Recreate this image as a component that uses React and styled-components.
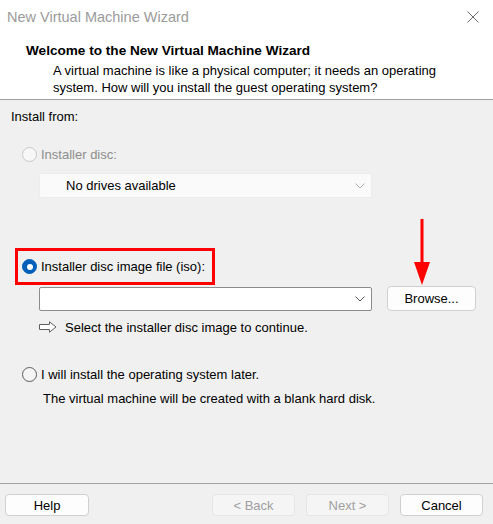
import React from "react";
import styled, { createGlobalStyle } from "styled-components";

const Global = createGlobalStyle`
  html, body { margin: 0; padding: 0; background: #f0f0f0; }
  body { font-family: "Liberation Sans", Arial, sans-serif; }
`;

const Window = styled.div`
  width: 493px;
  height: 524px;
  display: flex;
  flex-direction: column;
  background: #f0f0f0;
  color: #000;
  font-size: 13px;
  overflow: hidden;
`;

const Header = styled.div`
  background: #fff;
  height: 99px;
  border-bottom: 1px solid #a0a0a0;
  display: flex;
  flex-direction: column;
`;

const TitleBar = styled.div`
  height: 34px;
  display: flex;
  align-items: center;
  justify-content: space-between;
  padding: 0 14px 0 7px;
`;

const Title = styled.div`
  font-size: 14.5px;
  color: #9b9b9b;
`;

const Intro = styled.div`
  padding: 9px 0 0 26px;
`;

const Heading = styled.div`
  font-weight: bold;
  font-size: 13.6px;
  line-height: 16px;
`;

const Desc = styled.div`
  margin: 3px 0 0 27px;
  line-height: 17px;
`;

const Content = styled.div`
  position: relative;
  flex: 1;
  display: flex;
  flex-direction: column;
`;

const SectionLabel = styled.div`
  padding: 9px 0 0 11px;
  line-height: 16px;
`;

const RadioRow = styled.div`
  display: flex;
  align-items: center;
  gap: 4px;
  height: 18px;
  margin-top: ${(p) => p.$mt || 0}px;
  padding-left: ${(p) => (p.$inset ? 4 : 22)}px;
  color: ${(p) => (p.$disabled ? "#8d8d8d" : "#000")};
`;

const Radio = styled.span`
  width: 15px;
  height: 15px;
  box-sizing: border-box;
  border-radius: 50%;
  flex: none;
  display: flex;
  align-items: center;
  justify-content: center;
  background: ${(p) => (p.$checked ? "#005fb8" : p.$disabled ? "#f7f7f7" : "#f5f5f5")};
  border: 1px solid
    ${(p) => (p.$checked ? "#005fb8" : p.$disabled ? "#c8c8c8" : "#5c5c5c")};
  &::after {
    content: "";
    display: ${(p) => (p.$checked ? "block" : "none")};
    width: 6px;
    height: 6px;
    border-radius: 50%;
    background: #fff;
  }
`;

const Highlight = styled.div`
  margin: 50px 0 0 15px;
  width: 200px;
  height: 37px;
  box-sizing: border-box;
  border: 3px solid #ff0000;
  display: flex;
  align-items: center;
`;

const Combo = styled.div`
  width: 333px;
  height: ${(p) => (p.$disabled ? 25 : 24)}px;
  box-sizing: border-box;
  margin: ${(p) => p.$m || "0"};
  display: flex;
  align-items: center;
  justify-content: space-between;
  padding: 0 6px 0 26px;
  border-radius: 2px;
  background: ${(p) => (p.$disabled ? "#fafafa" : "#fff")};
  border: 1px solid ${(p) => (p.$disabled ? "#ececec" : "#8c8c8c")};
  color: #000;
`;

const Chevron = ({ color }) => (
  <svg width="10" height="6" viewBox="0 0 10 6">
    <path d="M0.5 0.5 L5 5 L9.5 0.5" fill="none" stroke={color} strokeWidth="1" />
  </svg>
);

const FileRow = styled.div`
  display: flex;
  align-items: flex-start;
  margin: 1px 0 0 39px;
  gap: 15px;
`;

const PushButton = styled.button`
  width: ${(p) => p.$w || 83}px;
  height: ${(p) => p.$h || 22}px;
  box-sizing: border-box;
  padding: 0;
  font-family: inherit;
  font-size: 13px;
  border-radius: 4px;
  background: ${(p) => (p.disabled ? "#f5f5f5" : "#fdfdfd")};
  border: 1px solid ${(p) => (p.disabled ? "#e6e6e6" : "#d0d0d0")};
  color: ${(p) => (p.disabled ? "#a0a0a0" : "#000")};
`;

const Hint = styled.div`
  display: flex;
  align-items: center;
  gap: 8px;
  height: 16px;
  margin: 8px 0 0 39px;
`;

const Note = styled.div`
  margin: 8px 0 0 43px;
  line-height: 16px;
`;

const RedArrow = styled.svg`
  position: absolute;
  left: 413px;
  top: 119px;
`;

const Footer = styled.div`
  height: 41px;
  border-top: 1px solid #a0a0a0;
  box-sizing: border-box;
  display: flex;
  align-items: flex-start;
  justify-content: space-between;
  padding: 10px 10px 0 5px;
`;

const ButtonGroup = styled.div`
  display: flex;
  gap: 11px;
`;

export default function App() {
  return (
    <>
      <Global />
      <Window>
        <Header>
          <TitleBar>
            <Title>New Virtual Machine Wizard</Title>
            <svg width="12" height="12" viewBox="0 0 12 12">
              <path d="M0.5 0.5 L11.5 11.5 M11.5 0.5 L0.5 11.5" stroke="#6a6a6a" strokeWidth="1" />
            </svg>
          </TitleBar>
          <Intro>
            <Heading>Welcome to the New Virtual Machine Wizard</Heading>
            <Desc>
              A virtual machine is like a physical computer; it needs an operating
              <br />
              system. How will you install the guest operating system?
            </Desc>
          </Intro>
        </Header>
        <Content>
          <SectionLabel>Install from:</SectionLabel>
          <RadioRow $mt={20} $disabled>
            <Radio $disabled />
            Installer disc:
          </RadioRow>
          <Combo $disabled $m="10px 0 0 39px">
            No drives available
            <Chevron color="#b0b0b0" />
          </Combo>
          <Highlight>
            <RadioRow $inset>
              <Radio $checked />
              Installer disc image file (iso):
            </RadioRow>
          </Highlight>
          <FileRow>
            <Combo $m="1px 0 0 0">
              <span />
              <Chevron color="#555" />
            </Combo>
            <PushButton $w={89} $h={25}>Browse...</PushButton>
          </FileRow>
          <Hint>
            <svg width="18" height="12" viewBox="0 0 18 12">
              <path
                d="M0.5 3.5 H10.5 V0.8 L17 6 L10.5 11.2 V8.5 H0.5 Z"
                fill="#fff"
                stroke="#606060"
                strokeWidth="1"
                strokeLinejoin="miter"
              />
            </svg>
            Select the installer disc image to continue.
          </Hint>
          <RadioRow $mt={30}>
            <Radio />
            I will install the operating system later.
          </RadioRow>
          <Note>The virtual machine will be created with a blank hard disk.</Note>
          <RedArrow width="18" height="67" viewBox="0 0 18 67">
            <rect x="7.5" y="0" width="3" height="45" fill="#ff0000" />
            <path d="M1 43 L17 43 L9 66 Z" fill="#ff0000" />
          </RedArrow>
        </Content>
        <Footer>
          <PushButton $w={84}>Help</PushButton>
          <ButtonGroup>
            <PushButton disabled>&lt; Back</PushButton>
            <PushButton disabled>Next &gt;</PushButton>
            <PushButton>Cancel</PushButton>
          </ButtonGroup>
        </Footer>
      </Window>
    </>
  );
}
